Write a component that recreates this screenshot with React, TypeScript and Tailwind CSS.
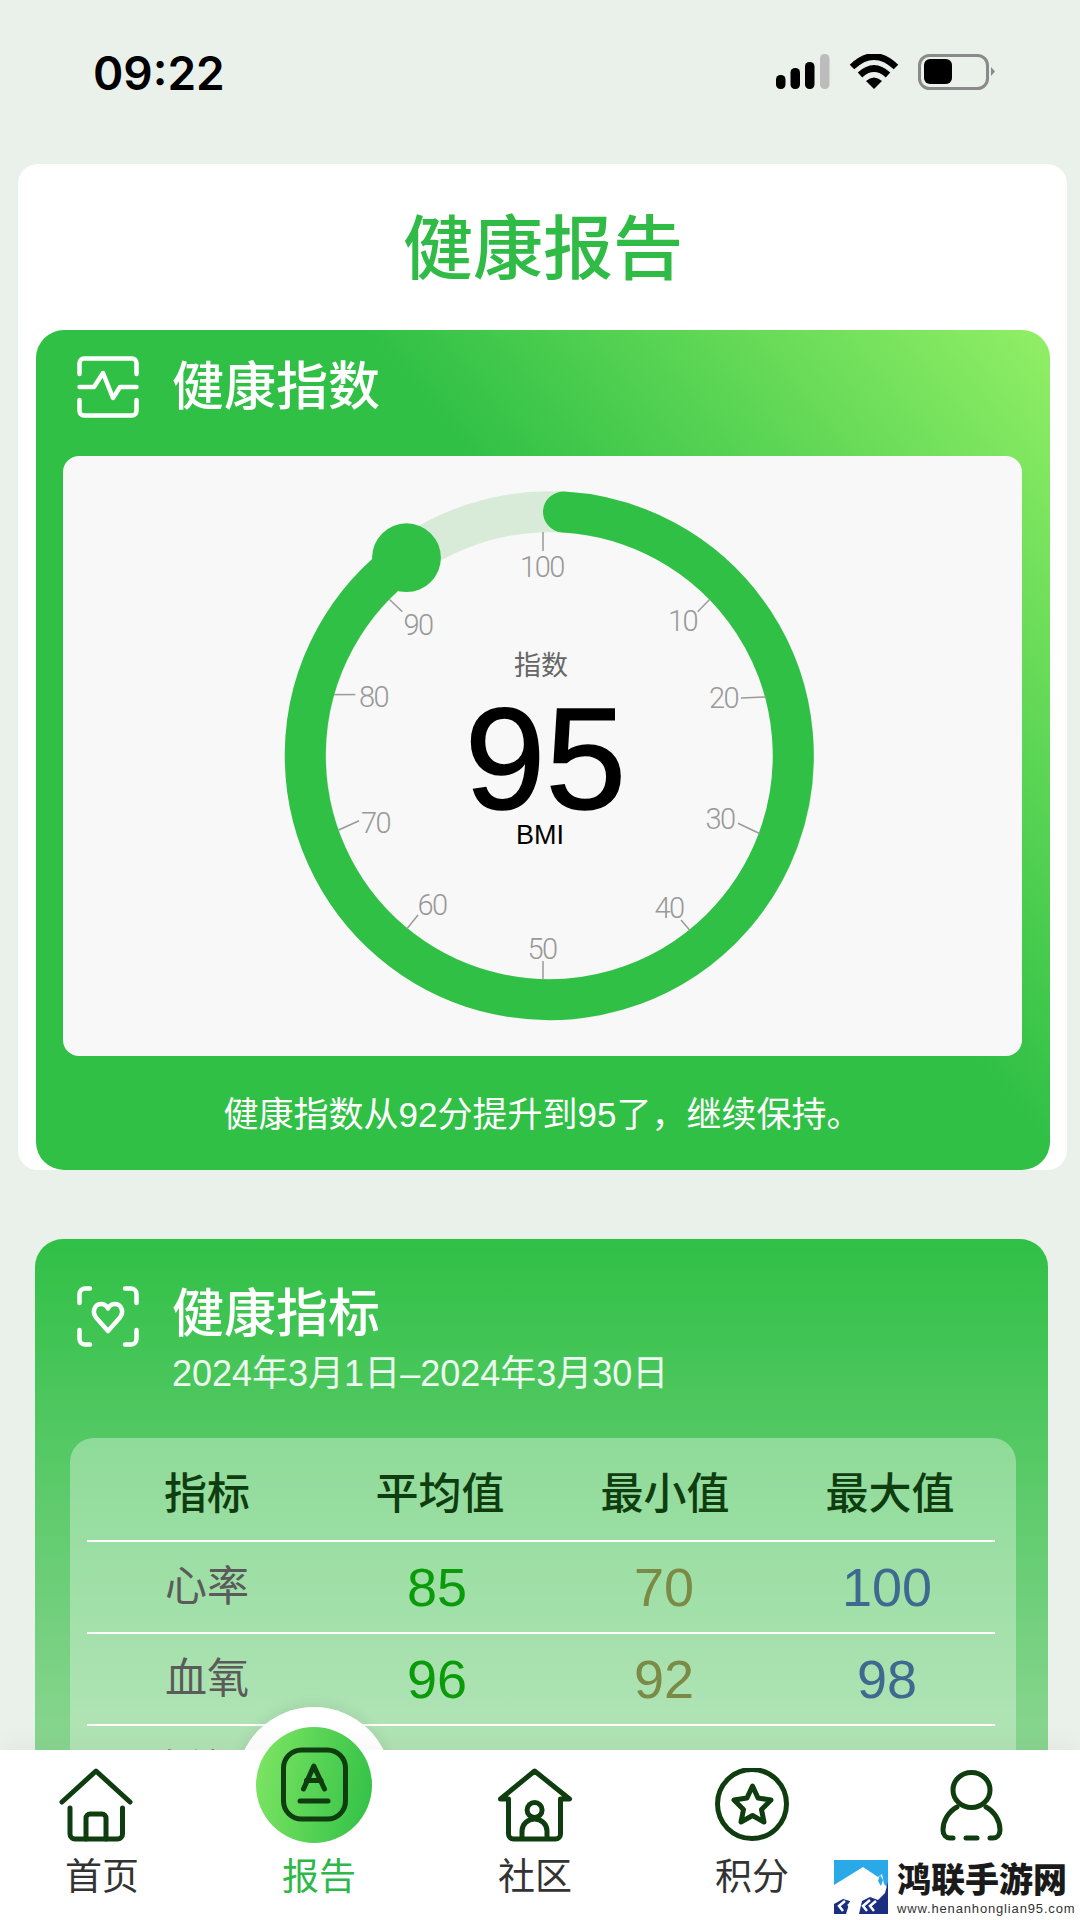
const sans = "[font-family:'Liberation_Sans','Noto_Sans_CJK_SC',sans-serif]"

const gaugeLabels = [
  { text: '100', x: 542, y: 567 },
  { text: '10', x: 682.5, y: 621 },
  { text: '20', x: 723.5, y: 698 },
  { text: '30', x: 720, y: 819 },
  { text: '40', x: 669, y: 908 },
  { text: '50', x: 542, y: 949 },
  { text: '60', x: 432, y: 905 },
  { text: '70', x: 375.5, y: 822.5 },
  { text: '80', x: 373.5, y: 696.5 },
  { text: '90', x: 418, y: 624.5 },
]

const gaugeTicks = [
  [543, 532, 543, 551],
  [709.5, 599.5, 697.7, 611.7],
  [766, 697, 741, 698],
  [760, 833.7, 738, 823.3],
  [690, 930.6, 681, 920],
  [543, 980, 543, 961],
  [407, 928.8, 418, 915],
  [338.8, 830, 359, 820.7],
  [334, 694.6, 355.4, 694.6],
  [389.5, 599.5, 402.4, 611.7],
]

const rows = [
  { name: '心率', avg: '85', min: '70', max: '100' },
  { name: '血氧', avg: '96', min: '92', max: '98' },
  { name: '收缩压', avg: '118', min: '110', max: '125' },
]

function StatusBar() {
  return (
    <div className="flex h-[164px] items-start justify-between pl-[93px] pr-[84px] pt-[54px]">
      <span className="pt-[1px] text-[46px] font-semibold leading-[36px] text-black [font-family:Inter,sans-serif]">09:22</span>
      <svg width="220" height="36" viewBox="776 54 220 36">
        <rect x="776" y="75" width="9.5" height="14" rx="4.5" fill="#000" />
        <rect x="790.5" y="68" width="9.5" height="21" rx="4.5" fill="#000" />
        <rect x="805" y="62" width="9.5" height="27" rx="4.5" fill="#000" />
        <rect x="820" y="54" width="9.5" height="35" rx="4.5" fill="#bcbcbc" />
        <path d="M852 67 Q874 46 896 67" fill="none" stroke="#000" strokeWidth="6.5" />
        <path d="M860 75 Q874 62 888 75" fill="none" stroke="#000" strokeWidth="6.5" />
        <path d="M866 81 Q874 74 882 81 L874 89 Z" fill="#000" />
        <rect x="919.5" y="55.5" width="68" height="33" rx="10" fill="none" stroke="#8a8a8a" strokeWidth="3" />
        <rect x="924" y="59" width="28" height="25" rx="6" fill="#000" />
        <path d="M991 67 L995 71.5 L991 76 Z" fill="#8a8a8a" />
      </svg>
    </div>
  )
}

function Gauge() {
  return (
    <svg width="540" height="540" viewBox="280 486 540 540" className={sans}>
      <circle cx="549.7" cy="755.7" r="244" fill="none" stroke="#d8ebd9" strokeWidth="41" />
      <path
        d="M563.5 512 A244 244 0 1 1 406.5 557.7"
        fill="none"
        stroke="#30c046"
        strokeWidth="41"
        strokeLinecap="round"
      />
      <circle cx="406.5" cy="557.7" r="34.4" fill="#30c046" />
      {gaugeTicks.map((t, i) => (
        <line key={i} x1={t[0]} y1={t[1]} x2={t[2]} y2={t[3]} stroke="#9a9a9a" strokeWidth="1.5" />
      ))}
      {gaugeLabels.map(l => (
        <text
          key={l.text}
          x={l.x}
          y={l.y + 10}
          textAnchor="middle"
          className="fill-[#999999] text-[29px] font-light tracking-[-1.5px] [font-family:Roboto,sans-serif]"
        >
          {l.text}
        </text>
      ))}
      <text x="541" y="675" textAnchor="middle" className="fill-[#666666] text-[27px]">指数</text>
      <text x="545.5" y="809" textAnchor="middle" className="fill-black stroke-black stroke-[1.5px] text-[145px]">95</text>
      <text x="540" y="844" textAnchor="middle" className="fill-black text-[27px]">BMI</text>
    </svg>
  )
}

function PulseIcon() {
  return (
    <svg width="62" height="62" viewBox="0 0 62 62" fill="none" stroke="#fff" strokeWidth="4.5" strokeLinecap="round" strokeLinejoin="round">
      <path d="M2.5 18V7a4.5 4.5 0 0 1 4.5-4.5H55a4.5 4.5 0 0 1 4.5 4.5V18" />
      <path d="M2.5 44V55a4.5 4.5 0 0 0 4.5 4.5H55a4.5 4.5 0 0 0 4.5-4.5V44" />
      <path d="M2.5 31H17L26 17L36 42L43 31H59.5" />
    </svg>
  )
}

function HeartScanIcon() {
  return (
    <svg width="62" height="62" viewBox="0 0 62 62" fill="none" stroke="#fff" strokeWidth="4.5" strokeLinecap="round" strokeLinejoin="round">
      <path d="M2.5 17V8a5.5 5.5 0 0 1 5.5-5.5H13" />
      <path d="M48 2.5H54a5.5 5.5 0 0 1 5.5 5.5V17" />
      <path d="M2.5 44V53a5.5 5.5 0 0 0 5.5 5.5H13" />
      <path d="M48 58.5H54a5.5 5.5 0 0 0 5.5-5.5V44" />
      <path d="M31 45L19 31.5C14.5 25.5 18 18 24 18C27 18 29.5 19.5 31 22.5C32.5 19.5 35 18 38 18C44 18 47.5 25.5 43 31.5Z" />
    </svg>
  )
}

function HomeIcon() {
  return (
    <svg width="76" height="76" viewBox="58 1768 76 76" fill="none" stroke="#0f3d10" strokeWidth="5" strokeLinecap="round" strokeLinejoin="round">
      <path d="M62 1802L96 1771L130 1802" />
      <path d="M70 1808V1834a5 5 0 0 0 5 5H117.5a5 5 0 0 0 5-5V1808" />
      <path d="M86 1839V1818a4 4 0 0 1 4-4H102a4 4 0 0 1 4 4V1839" />
    </svg>
  )
}

function CommunityIcon() {
  return (
    <svg width="76" height="76" viewBox="496 1768 76 76" fill="none" stroke="#0f3d10" strokeWidth="5" strokeLinecap="round" strokeLinejoin="round">
      <path d="M507.5 1799H499.5L533.6 1771L568.5 1799H559.5V1834a5 5 0 0 1-5 5H512.5a5 5 0 0 1-5-5Z" />
      <circle cx="533.6" cy="1810" r="7.5" />
      <path d="M521 1838V1831C521 1824 527 1819 533.6 1819C540 1819 546 1824 546 1831V1838" />
    </svg>
  )
}

function StarIcon() {
  return (
    <svg width="76" height="76" viewBox="714 1768 76 76" fill="none" stroke="#0f3d10" strokeWidth="5" strokeLinecap="round" strokeLinejoin="round">
      <circle cx="752" cy="1804" r="34.5" />
      <path d="M752.5 1786L758 1798L771 1800L761.5 1809.5L764 1822L752.5 1815.5L741 1822L743.5 1809.5L734 1800L747 1798Z" />
    </svg>
  )
}

function UserIcon() {
  return (
    <svg width="66" height="72" viewBox="939 1770 66 72" fill="none" stroke="#0f3d10" strokeWidth="5" strokeLinecap="round" strokeLinejoin="round">
      <ellipse cx="971.5" cy="1790" rx="18.5" ry="17.5" />
      <path d="M957 1807C948 1812 943 1821 943 1830C943 1835 946 1838 950 1838H953" />
      <path d="M986 1807C995 1812 1000 1821 1000 1830C1000 1835 997 1838 993 1838H990" />
      <path d="M966 1838H977" />
    </svg>
  )
}

function ReportIcon() {
  return (
    <svg width="68" height="76" viewBox="280 1748 68 76" fill="none" stroke="#0f3d10" strokeWidth="5" strokeLinecap="round" strokeLinejoin="round">
      <rect x="283.5" y="1751" width="62" height="69" rx="18" />
      <path d="M303.5 1790L313.8 1767L324.5 1790" />
      <path d="M306.5 1781.5H321" />
      <path d="M300 1802H328" />
    </svg>
  )
}

function NavItem({ icon, label, className, labelClass = '' }: { icon: React.ReactNode; label: string; className: string; labelClass?: string }) {
  return (
    <div className={`absolute top-0 flex flex-col items-center ${className}`}>
      <div className="flex h-[94px] items-end">{icon}</div>
      <span className={`mt-[15px] whitespace-nowrap text-[37px] leading-[37px] text-[#333333] ${labelClass}`}>{label}</span>
    </div>
  )
}

function BottomNav() {
  return (
    <div className="absolute bottom-0 left-0 h-[170px] w-full">
      {/* white bump behind the panel so only its top shows */}
      <div className="absolute left-[236px] top-[-43px] h-[156px] w-[156px] rounded-full bg-white shadow-[0_-2px_14px_rgba(0,0,0,0.08)]" />
      <div className="absolute inset-0 bg-white shadow-[0_-6px_24px_rgba(0,0,0,0.04)]" />
      <div className="absolute left-[256px] top-[-23px] flex h-[116px] w-[116px] items-center justify-center rounded-full bg-[linear-gradient(100deg,#80e664,#30c046)]">
        <ReportIcon />
      </div>
      <NavItem icon={<HomeIcon />} label="首页" className="left-[58px] w-[76px]" labelClass="pl-[12px]" />
      <span className="absolute left-[282px] top-[109px] text-[37px] leading-[37px] text-[#2fb84a]">报告</span>
      <NavItem icon={<CommunityIcon />} label="社区" className="left-[497px] w-[76px]" />
      <NavItem icon={<StarIcon />} label="积分" className="left-[714px] w-[76px]" />
      <div className="absolute left-[939px] top-[20px]">
        <UserIcon />
      </div>
    </div>
  )
}

function Watermark() {
  return (
    <div className="absolute left-[834px] top-[1860px] flex h-[54px] w-[240px] items-start gap-[9px] bg-white">
      <svg width="54" height="54" viewBox="0 0 54 54" className="shrink-0">
        <rect width="54" height="54" fill="#2aa9e8" />
        <path d="M0 25L29 7L44 17L48 14L50 24L54 28V54H0Z" fill="#fff" />
        <path d="M46 15L49 20L47 26L44 21Z" fill="#2aa9e8" />
        <path d="M54 22L51 33L44 40L36 37L28 41L25 54H54Z" fill="#1a2f80" />
        <path d="M0 44L9 39L16 41L12 54H0Z" fill="#1a2f80" />
        <path d="M11 41L5 46L9 51M19 41L14 46" stroke="#fff" strokeWidth="2.5" fill="none" />
        <path d="M36 40L29 46L33 51M42 41L36 46L40 51" stroke="#fff" strokeWidth="2.5" fill="none" />
      </svg>
      <div className="flex flex-col">
        <span className="text-[34px] font-black leading-[40px] text-[#1a1a1a]">鸿联手游网</span>
        <span className="mt-[2px] text-[13px] leading-[13px] tracking-[0.065em] text-[#333333]">www.henanhonglian95.com</span>
      </div>
    </div>
  )
}

function StatsTable() {
  return (
    <div className="ml-[35px] mr-[32px] mt-[44px] rounded-[24px] bg-white/35 pl-[17px] pr-[21px] pt-[28px]">
      <div className="grid h-[76px] grid-cols-[240px_226px_224px_218px] border-b-2 border-white pb-[20px] text-center text-[43px] font-medium leading-[56px] text-[#0f3d10]">
        <span>指标</span>
        <span>平均值</span>
        <span>最小值</span>
        <span className="pl-[8px]">最大值</span>
      </div>
      {rows.map(r => (
        <div key={r.name} className="grid h-[92px] grid-cols-[240px_226px_224px_218px] items-center border-b-2 border-white text-center">
          <span className="text-[42px] leading-[56px] text-[#5b5b5b]">{r.name}</span>
          <span className="pr-[6px] text-[54px] leading-[60px] text-[#0a9a0a]">{r.avg}</span>
          <span className="pr-[2px] text-[54px] leading-[60px] text-[#7b8a45]">{r.min}</span>
          <span className="pl-[2px] text-[54px] leading-[60px] text-[#3f6a90]">{r.max}</span>
        </div>
      ))}
    </div>
  )
}

export default function App() {
  return (
    <div className={`relative h-[1920px] w-[1080px] overflow-hidden bg-[#eaf1eb] ${sans}`}>
      <StatusBar />

      {/* report card */}
      <div className="ml-[18px] mr-[13px] h-[1006px] rounded-[20px] bg-white pl-[18px] pr-[17px] pt-[48px]">
        <h1 className="h-[118px] text-center text-[70px] font-medium leading-[76px] text-[#2fbb46]">健康报告</h1>
        <div className="h-[840px] rounded-[28px] bg-[linear-gradient(50deg,#30c046_60%,#92ef66_100%)] pl-[27px] pr-[28px]">
          <div className="flex h-[126px] items-center gap-[33px] pb-[12px] pl-[14px]">
            <PulseIcon />
            <span className="text-[52px] font-medium leading-[60px] text-white">健康指数</span>
          </div>
          <div className="h-[600px] rounded-[16px] bg-[#f8f8f8] pl-[217px] pt-[30px]">
            <Gauge />
          </div>
          <p className="pt-[39px] text-center text-[35px] leading-[40px] text-white">{'健康指数从92分提升到95了\uFF0C继续保持。'}</p>
        </div>
      </div>

      {/* metrics card */}
      <div className="ml-[35px] mr-[32px] mt-[69px] h-[760px] rounded-[28px] bg-[linear-gradient(180deg,#30c046,#b5e0b4)] pt-[47px]">
        <div className="flex items-start gap-[33px] pl-[42px]">
          <HeartScanIcon />
          <div className="flex flex-col">
            <span className="text-[52px] font-medium leading-[56px] text-white">健康指标</span>
            <span className="mt-[12px] whitespace-nowrap text-[36px] leading-[40px] text-white/90">2024年3月1日–2024年3月30日</span>
          </div>
        </div>
        <StatsTable />
      </div>

      <BottomNav />
      <Watermark />
    </div>
  )
}
